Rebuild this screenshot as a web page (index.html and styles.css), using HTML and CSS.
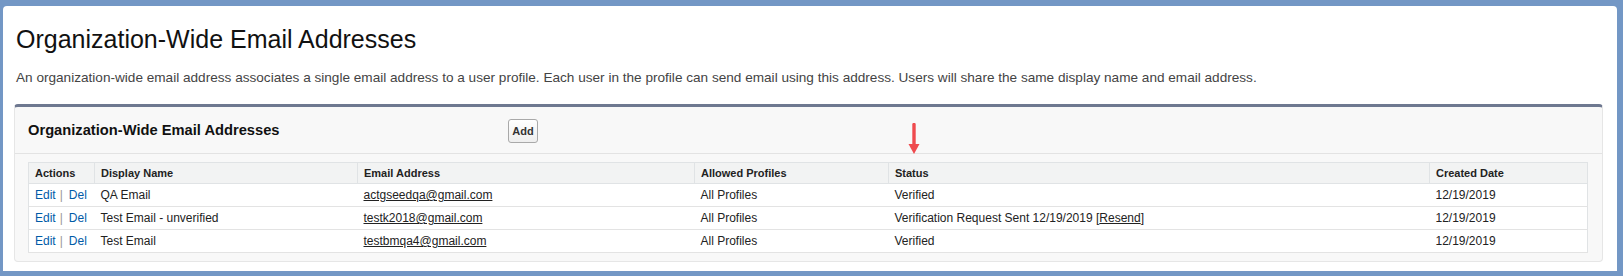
FILE: index.html
```html
<!DOCTYPE html>
<html lang="en">
<head>
<meta charset="utf-8">
<title>Organization-Wide Email Addresses</title>
<link rel="stylesheet" href="styles.css">
</head>
<body>
<div class="card">
  <h1 class="page-title">Organization-Wide Email Addresses</h1>
  <p class="page-desc">An organization-wide email address associates a single email address to a user profile. Each user in the profile can send email using this address. Users will share the same display name and email address.</p>
  <div class="block">
    <div class="block-head">
      <h2 class="block-title">Organization-Wide Email Addresses</h2>
      <button class="btn" type="button">Add</button>
      <svg class="arrow" width="14" height="34" viewBox="0 0 14 34" aria-hidden="true">
        <path d="M7 1.5 V23" stroke="#ef4a4e" stroke-width="3.4" stroke-linecap="round"/>
        <path d="M1.5 21 L12.5 21 L7 31 Z" fill="#ef4a4e"/>
      </svg>
    </div>
    <div class="block-body">
      <table class="list">
        <colgroup>
          <col class="c-actions"><col class="c-name"><col class="c-email"><col class="c-prof"><col class="c-status"><col class="c-date">
        </colgroup>
        <thead>
          <tr><th>Actions</th><th>Display Name</th><th>Email Address</th><th>Allowed Profiles</th><th>Status</th><th>Created Date</th></tr>
        </thead>
        <tbody>
          <tr>
            <td><a class="act" href="#">Edit</a><span class="sep">|</span><a class="act" href="#">Del</a></td>
            <td>QA Email</td>
            <td><a class="mail" href="#">actgseedqa@gmail.com</a></td>
            <td>All Profiles</td>
            <td>Verified</td>
            <td>12/19/2019</td>
          </tr>
          <tr>
            <td><a class="act" href="#">Edit</a><span class="sep">|</span><a class="act" href="#">Del</a></td>
            <td>Test Email - unverified</td>
            <td><a class="mail" href="#">testk2018@gmail.com</a></td>
            <td>All Profiles</td>
            <td>Verification Request Sent 12/19/2019 [<a class="mail" href="#">Resend</a>]</td>
            <td>12/19/2019</td>
          </tr>
          <tr>
            <td><a class="act" href="#">Edit</a><span class="sep">|</span><a class="act" href="#">Del</a></td>
            <td>Test Email</td>
            <td><a class="mail" href="#">testbmqa4@gmail.com</a></td>
            <td>All Profiles</td>
            <td>Verified</td>
            <td>12/19/2019</td>
          </tr>
        </tbody>
      </table>
    </div>
  </div>
</div>
</body>
</html>
```

FILE: styles.css
```css
html, body {
  margin: 0;
  padding: 0;
}
body {
  background: #7397c5;
  font-family: "Liberation Sans", Arial, sans-serif;
  color: #000;
  height: 276px;
  overflow: hidden;
}
.card {
  background: #fff;
  margin: 6px 6px 0 3px;
  height: 265px;
  border-radius: 4px 4px 0 0;
  padding: 0 14px 0 11px;
  box-sizing: border-box;
  overflow: hidden;
}
.page-title {
  margin: 0;
  padding: 17px 0 0 2px;
  font-size: 25px;
  font-weight: normal;
  line-height: 32px;
  color: #111;
}
.page-desc {
  margin: 0;
  padding: 14px 0 0 2px;
  font-size: 13.6px;
  line-height: 17px;
  color: #444;
}
.block {
  margin-top: 18px;
  background: #f8f8f8;
  border: 1px solid #e6e6e6;
  border-top: 3px solid #6e7890;
  border-radius: 4px;
  padding: 0 14px 8px 13px;
}
.block-head {
  position: relative;
  display: flex;
  align-items: center;
  height: 46px;
  border-bottom: 1px solid #e3e3e3;
  margin: 0 -14px 0 -13px;
  padding: 0 14px 0 13px;
}
.block-title {
  margin: 0;
  width: 480px;
  flex: none;
  font-size: 14.7px;
  font-weight: bold;
  color: #111;
}
.btn {
  font-family: "Liberation Sans", Arial, sans-serif;
  font-size: 11px;
  font-weight: bold;
  color: #333;
  background: linear-gradient(#ffffff, #eeeeee);
  border: 1px solid #a9a9a9;
  border-radius: 3px;
  height: 24px;
  width: 30px;
  padding: 0;
  margin-top: 2px;
}
.arrow {
  position: absolute;
  left: 892px;
  top: 16px;
}
.block-body {
  padding-top: 8px;
}
.list {
  width: 100%;
  table-layout: fixed;
  border-collapse: collapse;
  background: #fff;
  border: 1px solid #e0e3e5;
}
.c-actions { width: 66px; }
.c-name { width: 263px; }
.c-email { width: 337px; }
.c-prof { width: 194px; }
.c-status { width: 541px; }
.c-date { width: auto; }
.list th {
  background: #f2f3f3;
  font-size: 11px;
  font-weight: bold;
  color: #222;
  text-align: left;
  height: 20px;
  padding: 0 2px 0 6px;
  border-left: 1px solid #e0e3e5;
  border-bottom: 1px solid #e0e3e5;
  white-space: nowrap;
}
.list th:first-child { border-left: 0; }
.list td {
  font-size: 12px;
  color: #222;
  height: 22px;
  padding: 0 2px 0 6px;
  border-bottom: 1px solid #e3e3e3;
  white-space: nowrap;
}
.act {
  color: #015ba7;
  text-decoration: none;
}
.sep {
  color: #999;
  margin: 0 6px 0 4px;
}
.mail {
  color: #222;
  text-decoration: underline;
}
```
